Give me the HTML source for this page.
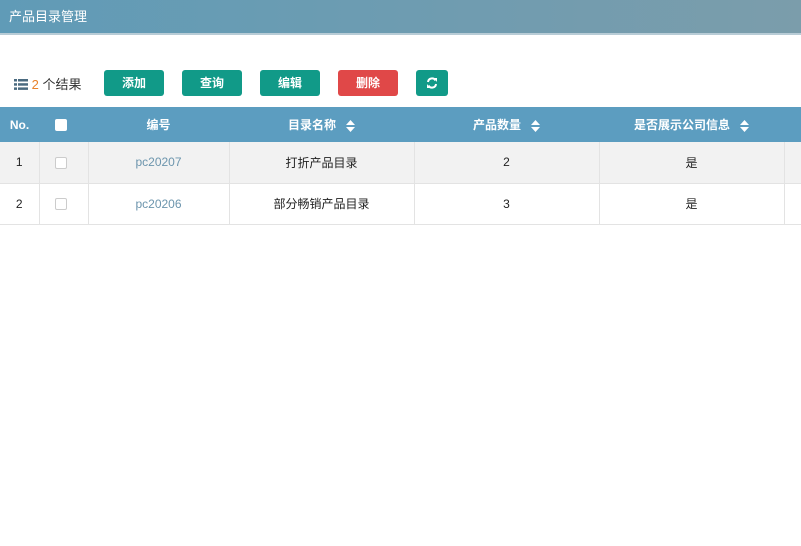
<!DOCTYPE html>
<html><head><meta charset="utf-8"><style>
*{margin:0;padding:0;box-sizing:border-box}
body{width:801px;height:546px;background:#fff;font-family:"Liberation Sans","Noto Sans CJK SC",sans-serif;font-size:12px;color:#222;position:relative;overflow:hidden}
.top{position:absolute;left:0;top:0;width:801px;height:35px;background:linear-gradient(90deg,#609bb7,#7b9dab);border-bottom:2px solid #b8ccd6;color:#fff;font-size:13px;line-height:34px;padding-left:9px}
.res{position:absolute;left:14px;top:74px;font-size:13px;color:#333}
.res b{font-weight:normal;color:#e8822a}
.btn{position:absolute;top:70px;height:26px;width:60px;border-radius:3px;background:#119a88;color:#fff;font-size:12px;text-align:center;line-height:26px;font-weight:bold}
table{position:absolute;left:0;top:107px;border-collapse:collapse;width:801px;table-layout:fixed}
th{background:#5c9dc0;color:#fff;height:35px;font-size:12px;font-weight:bold}
td{height:41px;text-align:center;border:1px solid #e3e3e3;border-top:none;font-size:12px}
tr.a td{background:#f2f2f2}
.lk{color:#6c95ad}
.cb{display:inline-block;width:12px;height:12px;border:1px solid #ccc;border-radius:2px;background:#fff;vertical-align:middle}
.s{display:inline-block;margin-left:10px;vertical-align:middle}
.c{padding-right:6px}
</style></head><body>
<div class="top">产品目录管理</div>
<div class="res"><svg width="14" height="11" viewBox="0 0 14 11" style="vertical-align:-1px"><g fill="#4a6a80"><rect x="0" y="0" width="3" height="2.5"/><rect x="4" y="0" width="10" height="2.5"/><rect x="0" y="4.2" width="3" height="2.5"/><rect x="4" y="4.2" width="10" height="2.5"/><rect x="0" y="8.4" width="3" height="2.5"/><rect x="4" y="8.4" width="10" height="2.5"/></g></svg> <b>2</b> 个结果</div>
<div class="btn" style="left:104px">添加</div>
<div class="btn" style="left:182px">查询</div>
<div class="btn" style="left:260px">编辑</div>
<div class="btn" style="left:338px;background:#e04848">删除</div>
<div class="btn" style="left:416px;width:32px"><svg width="12" height="12" viewBox="0 0 12 12" style="vertical-align:-2px"><path d="M2 5A4 4 0 0 1 9.5 3.5M10 7A4 4 0 0 1 2.5 8.5" stroke="#fff" stroke-width="2" fill="none"/><path d="M8 1L11 1L11 5Z M1 7L1 11L4 11Z" fill="#fff"/></svg></div>
<table>
<colgroup><col style="width:39px"><col style="width:49px"><col style="width:141px"><col style="width:185px"><col style="width:185px"><col style="width:185px"><col style="width:17px"></colgroup>
<tr><th>No.</th><th class="c"><span class="cb" style="border:none"></span></th><th>编号</th><th>目录名称<svg class="s" width="9" height="12" viewBox="0 0 9 12"><path d="M0 5L4.5 0L9 5ZM0 7L4.5 12L9 7Z" fill="#fff"/></svg></th><th>产品数量<svg class="s" width="9" height="12" viewBox="0 0 9 12"><path d="M0 5L4.5 0L9 5ZM0 7L4.5 12L9 7Z" fill="#fff"/></svg></th><th>是否展示公司信息<svg class="s" width="9" height="12" viewBox="0 0 9 12"><path d="M0 5L4.5 0L9 5ZM0 7L4.5 12L9 7Z" fill="#fff"/></svg></th><th></th></tr>
<tr class="a"><td style="border-left:none">1</td><td class="c"><span class="cb"></span></td><td class="lk">pc20207</td><td>打折产品目录</td><td>2</td><td>是</td><td style="border-right:none"></td></tr>
<tr><td style="border-left:none">2</td><td class="c"><span class="cb"></span></td><td class="lk">pc20206</td><td>部分畅销产品目录</td><td>3</td><td>是</td><td style="border-right:none"></td></tr>
</table>
</body></html>
